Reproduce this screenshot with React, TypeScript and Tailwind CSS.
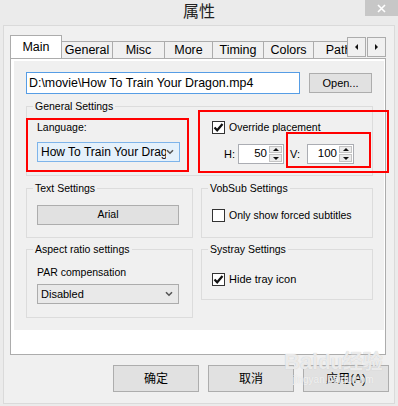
import React from "react";

const tabs = [
  { label: "General", w: "w-[51px]" },
  { label: "Misc", w: "w-[52px]" },
  { label: "More", w: "w-[48px]" },
  { label: "Timing", w: "w-[51px]" },
  { label: "Colors", w: "w-[50px]" },
  { label: "Path", w: "w-[50px]" },
];

function Check({ checked }: { checked?: boolean }) {
  return (
    <div className="w-[13px] h-[13px] border border-[#333] bg-white flex items-center justify-center shrink-0">
      {checked && (
        <svg width="11" height="11" viewBox="0 0 11 11">
          <path d="M1.5 5.5 L4.2 8.3 L9.5 2" fill="none" stroke="#111" strokeWidth={2.2} />
        </svg>
      )}
    </div>
  );
}

function Chevron() {
  return (
    <svg width="8" height="6" viewBox="0 0 8 6" className="shrink-0">
      <path d="M1 1.2 L4 4.2 L7 1.2" fill="none" stroke="#555" strokeWidth={1.6} />
    </svg>
  );
}

function Tri({ dir }: { dir: "up" | "down" | "left" | "right" }) {
  const pts = {
    up: "0,3 3,0 6,3",
    down: "0,0 6,0 3,3",
    left: "3,0 3,6 0,3",
    right: "0,0 0,6 3,3",
  }[dir];
  const vertical = dir === "up" || dir === "down";
  return (
    <svg width={vertical ? 6 : 3} height={vertical ? 3 : 6} viewBox={vertical ? "0 0 6 3" : "0 0 3 6"}>
      <polygon points={pts} fill="#111" />
    </svg>
  );
}

function Spin({ value, w }: { value: string; w: string }) {
  return (
    <div className={`${w} h-[20px] border border-[#abadb3] bg-white flex`}>
      <div className="flex-1 flex items-center justify-end pr-[1px] text-[11.5px]">{value}</div>
      <div className="w-[15px] flex flex-col p-[1px] gap-px">
        <div className="flex-1 bg-[#ececec] border border-[#c4c4c4] flex items-center justify-center">
          <Tri dir="up" />
        </div>
        <div className="flex-1 bg-[#ececec] border border-[#c4c4c4] flex items-center justify-center">
          <Tri dir="down" />
        </div>
      </div>
    </div>
  );
}

function Group({
  label,
  className,
  children,
}: {
  label: string;
  className: string;
  children?: React.ReactNode;
}) {
  return (
    <fieldset className={`border border-[#dcdcdc] ${className}`}>
      <legend className="ml-[6px] px-[2px] text-[10.5px] leading-[12px]">{label}</legend>
      {children}
    </fieldset>
  );
}

export default function App() {
  return (
    <div className="relative w-[398px] h-[406px] bg-[#ebebeb] overflow-hidden text-black font-['Liberation_Sans','Noto_Sans_CJK_SC',sans-serif]">
      {/* title bar */}
      <div className="h-[25px] flex items-center justify-center text-[16px] text-[#222] pb-[1px]">属性</div>
      <div className="absolute right-0 top-0 w-[33px] h-[16px] bg-[#c7c7c7] flex items-center justify-center">
        <svg width="9" height="9" viewBox="0 0 9 9">
          <path d="M1 1 L8 8 M8 1 L1 8" stroke="#fff" strokeWidth={1.6} />
        </svg>
      </div>

      {/* dialog body */}
      <div className="mx-[3px] h-[379px] border border-[#dadada] bg-[#f0f0f0] pl-[6px] pt-[9px] pr-[5px]">
        {/* tab strip */}
        <div className="flex h-[23px] items-end w-[376px]">
          <div className="flex items-end w-[337px] overflow-hidden h-full">
            <div className="relative z-10 w-[52px] h-[24px] -mb-px shrink-0 border border-b-0 border-[#acacac] bg-white flex items-center justify-center text-[12.5px] pb-[1px]">
              Main
            </div>
            {tabs.map((t) => (
              <div
                key={t.label}
                className={`${t.w} h-[17px] shrink-0 border-t border-r border-[#acacac] bg-[#f0f0f0] flex items-center justify-center text-[12.5px]`}
              >
                {t.label}
              </div>
            ))}
          </div>
          <div className="self-start mt-[2px] flex gap-px">
            <div className="w-[19px] h-[20px] border border-[#acacac] bg-[#f0f0f0] flex items-center justify-center">
              <Tri dir="left" />
            </div>
            <div className="w-[19px] h-[20px] border border-[#acacac] bg-[#f0f0f0] flex items-center justify-center">
              <Tri dir="right" />
            </div>
          </div>
        </div>

        {/* tab page */}
        <div className="w-[376px] h-[297px] border border-[#acacac] bg-white pl-[3px] pt-[2px]">
          <div className="w-[370px] h-[269px] bg-[#f0f0f0] pl-[12px] pt-[11px]">
            {/* file row */}
            <div className="flex items-center">
              <div className="w-[274px] h-[22px] border border-[#569de5] bg-white flex items-center pl-[2px] text-[12.4px] whitespace-nowrap overflow-hidden">
                D:\movie\How To Train Your Dragon.mp4
              </div>
              <div className="ml-[9px] w-[63px] h-[20px] border border-[#adadad] bg-[#e1e1e1] flex items-center justify-center text-[11px]">
                Open...
              </div>
            </div>

            {/* general settings */}
            <Group label="General Settings" className="mt-[6px] w-[347px] h-[76px]">
              <div className="flex pl-[10px]">
                <div className="w-[143px] flex flex-col">
                  <div className="mt-[9px] text-[10.5px] leading-[13px]">Language:</div>
                  <div className="mt-[8px] h-[20px] border border-[#7eb4ea] bg-[#e5f1fb] flex items-center pl-[3px] pr-[5px] text-[12px] whitespace-nowrap overflow-hidden">
                    <span className="flex-1 overflow-hidden">How To Train Your Dragon</span>
                    <Chevron />
                  </div>
                </div>
                <div className="ml-[32px] flex flex-col">
                  <div className="mt-[8px] flex items-center gap-[4px] text-[10.5px]">
                    <Check checked />
                    <span>Override placement</span>
                  </div>
                  <div className="mt-[8px] flex items-center pl-[12px] text-[11px]">
                    <span className="w-[14px]">H:</span>
                    <Spin value="50" w="w-[46px]" />
                    <span className="ml-[6px] w-[17px]">V:</span>
                    <Spin value="100" w="w-[47px]" />
                  </div>
                </div>
              </div>
            </Group>

            {/* second row */}
            <div className="mt-[6px] flex gap-[8px]">
              <Group label="Text Settings" className="w-[167px] h-[56px]">
                <div className="mt-[11px] ml-[10px] w-[142px] h-[20px] border border-[#adadad] bg-[#e1e1e1] flex items-center justify-center text-[10.5px]">
                  Arial
                </div>
              </Group>
              <Group label="VobSub Settings" className="w-[172px] h-[56px]">
                <div className="mt-[14px] ml-[10px] flex items-center gap-[4px] text-[10.5px]">
                  <Check />
                  <span>Only show forced subtitles</span>
                </div>
              </Group>
            </div>

            {/* third row */}
            <div className="mt-[5px] flex gap-[8px] items-start">
              <Group label="Aspect ratio settings" className="w-[167px] h-[75px]">
                <div className="ml-[10px] mt-[11px] text-[10.5px] leading-[13px]">PAR compensation</div>
                <div className="ml-[10px] mt-[5px] w-[142px] h-[20px] border border-[#acacac] bg-[#e9e9e9] flex items-center pl-[3px] pr-[5px] text-[11px]">
                  <span className="flex-1">Disabled</span>
                  <Chevron />
                </div>
              </Group>
              <Group label="Systray Settings" className="w-[172px] h-[57px]">
                <div className="mt-[16px] ml-[10px] flex items-center gap-[4px] text-[11px]">
                  <Check checked />
                  <span>Hide tray icon</span>
                </div>
              </Group>
            </div>
          </div>
        </div>

        {/* dialog buttons */}
        <div className="mt-[10px] flex justify-end gap-[9px]">
          {["确定", "取消", "应用(A)"].map((b) => (
            <div
              key={b}
              className="w-[86px] h-[27px] border border-[#adadad] bg-[#e1e1e1] flex items-center justify-center text-[12px]"
            >
              {b}
            </div>
          ))}
        </div>
      </div>

      {/* red annotation boxes */}
      <div className="absolute left-[26px] top-[118px] w-[163px] h-[54px] border-2 border-[#f00]" />
      <div className="absolute left-[198px] top-[110px] w-[191px] h-[63px] border-2 border-[#f00]" />
      <div className="absolute left-[286px] top-[132px] w-[85px] h-[36px] border-2 border-[#f00]" />

      {/* watermark */}
      <div className="absolute left-[284px] top-[350px] flex flex-col items-center text-white/70 pointer-events-none">
        <div className="flex items-end text-[22px] font-bold leading-[24px] [text-shadow:0_0_1px_#bbb]">
          <span>Bai</span>
          <span className="text-[20px]">du经验</span>
        </div>
        <div className="text-[10px] leading-[12px] [text-shadow:0_0_1px_#ccc]">jingyan.baidu.com</div>
      </div>
    </div>
  );
}
